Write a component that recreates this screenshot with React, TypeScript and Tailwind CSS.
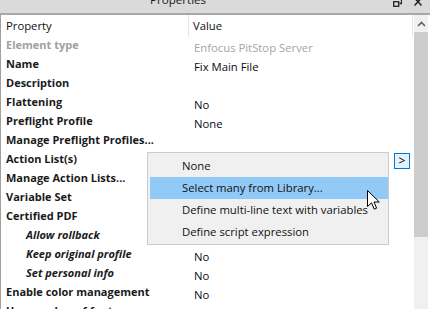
import React from 'react';

interface Row {
  label: string;
  value?: string;
  dim?: boolean;
  indent?: boolean;
}

const rows: Row[] = [
  { label: 'Element type', value: 'Enfocus PitStop Server', dim: true },
  { label: 'Name', value: 'Fix Main File' },
  { label: 'Description' },
  { label: 'Flattening', value: 'No' },
  { label: 'Preflight Profile', value: 'None' },
  { label: 'Manage Preflight Profiles...' },
  { label: 'Action List(s)' },
  { label: 'Manage Action Lists...' },
  { label: 'Variable Set' },
  { label: 'Certified PDF' },
  { label: 'Allow rollback', indent: true },
  { label: 'Keep original profile', value: 'No', indent: true },
  { label: 'Set personal info', value: 'No', indent: true },
  { label: 'Enable color management', value: 'No' },
  { label: 'Use number of fonts' },
];

const menuItems = [
  'None',
  'Select many from Library...',
  'Define multi-line text with variables',
  'Define script expression',
];

export default function App() {
  return (
    <div className="relative w-[430px] h-[309px] overflow-hidden bg-white font-['Open_Sans',sans-serif] text-[11.3px]">
      {/* title bar */}
      <div className="relative h-[13px] bg-[#dadada] overflow-hidden">
        <div className="absolute left-[150px] top-[-8px] leading-[16px] text-[11.6px] text-[#1a1a1a]">Properties</div>
        <svg className="absolute left-[393px] top-0" width="9" height="7" viewBox="0 0 9 7">
          <path d="M3 -1 H8.5 V3.5 H6.5" fill="none" stroke="#222" strokeWidth="1.3" />
          <rect x="0.7" y="1.7" width="5" height="4.6" fill="none" stroke="#222" strokeWidth="1.3" />
        </svg>
        <svg className="absolute left-[414px] top-0" width="8" height="6" viewBox="0 0 8 6">
          <path d="M0.5 -2 L7.5 5.5 M7.5 -2 L0.5 5.5" stroke="#222" strokeWidth="1.5" />
        </svg>
      </div>
      <div className="h-[2px] bg-[#a8a8a8]" />

      <div className="flex h-[294px] border-l border-[#a0a0a0]">
        <div className="flex-1 flex flex-col">
          {/* header */}
          <div className="grid grid-cols-[188px_223px_1px] h-[22px] shrink-0">
            <div className="pl-[5px] pt-[3px] leading-[16px] text-[#111] border-r border-[#e5e5e5]">Property</div>
            <div className="pl-[4px] pt-[3px] leading-[16px] text-[#111]">Value</div>
            <div className="bg-[#e5e5e5]" />
          </div>
          {rows.map((r) => (
            <div key={r.label} className="grid grid-cols-[188px_1fr] h-[19px] shrink-0">
              <div
                className={`leading-[16px] whitespace-nowrap font-bold text-[11px] ${r.indent ? 'pl-[25px] italic' : 'pl-[5px]'} ${
                  r.dim ? 'text-[#a0a0a0]' : 'text-[#1a1a1a]'
                }`}
              >
                {r.label}
              </div>
              <div className={`pl-[5px] pt-[3px] leading-[16px] whitespace-nowrap ${r.dim ? 'text-[#a3a4ac]' : 'text-[#0a0a14]'}`}>
                {r.value}
              </div>
            </div>
          ))}
        </div>

        {/* scrollbar */}
        <div className="w-[15px] ml-[1px] flex flex-col">
          <div className="h-[17px] bg-[#f0f0f0] flex items-center justify-center">
            <svg width="9" height="6" viewBox="0 0 9 6">
              <path d="M1 5 L4.5 1.5 L8 5" fill="none" stroke="#606060" strokeWidth="1.6" />
            </svg>
          </div>
          <div className="h-[205px] bg-[#cdcdcd]" />
          <div className="flex-1 bg-[#f0f0f0]" />
        </div>
        <div className="w-[2px] bg-white" />
      </div>

      {/* dropdown menu */}
      <div className="absolute left-[147px] top-[152px] w-[242px] h-[93px] bg-[#f0f0f0] border border-[#cccccc] pt-[2px]">
        {menuItems.map((m, i) => (
          <div
            key={m}
            className={`h-[22px] ml-[2px] pl-[32px] flex items-center whitespace-nowrap text-[#111] ${
              i === 1 ? 'bg-[#91c9f7]' : ''
            }`}
          >
            {m}
          </div>
        ))}
      </div>

      {/* expand button */}
      <div className="absolute left-[394px] top-[153px] w-[16px] h-[16px] border border-[#0078d7] bg-[#e5f1fb] flex items-center justify-center leading-none text-[12px] text-black">
        &gt;
      </div>

      {/* mouse cursor */}
      <svg className="absolute left-[367px] top-[190px]" width="14" height="22" viewBox="0 0 14 22">
        <path
          d="M0.5 0.5 V16.5 L4.5 12.8 L7.2 19.2 L9.6 18.2 L7 12 H12.3 Z"
          fill="#fff"
          stroke="#000"
          strokeWidth="1"
          strokeLinejoin="miter"
        />
      </svg>
    </div>
  );
}
